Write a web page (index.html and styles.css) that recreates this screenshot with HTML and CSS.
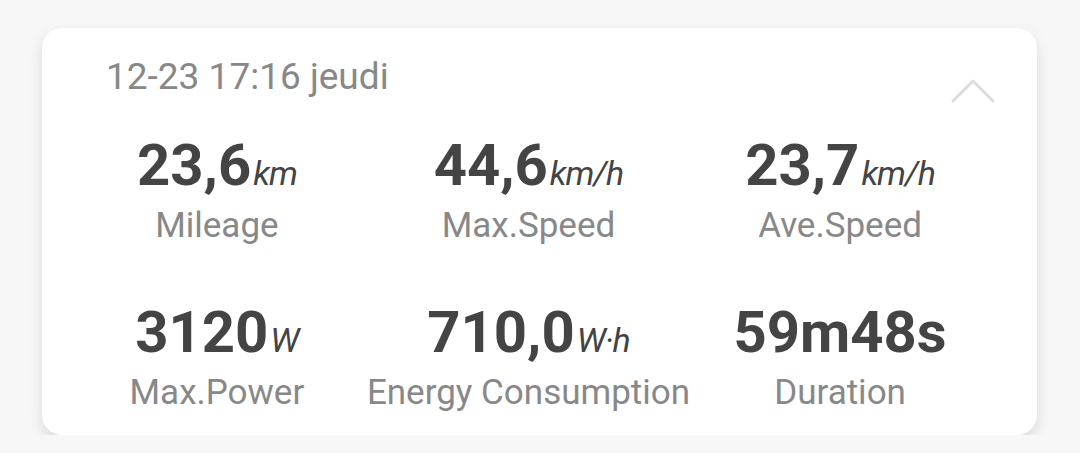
FILE: index.html
```html
<!DOCTYPE html>
<html lang="fr">
<head>
  <meta charset="UTF-8">
  <title>Trajet</title>
  <link rel="stylesheet" href="styles.css">
</head>
<body>
  <div class="card">
    <div class="date">12-23 17:16 jeudi</div>
    <svg class="toggle" width="44" height="26" viewBox="0 0 44 26">
      <polyline points="2,24 22,4 42,24" fill="none" stroke="#dcdcdc" stroke-width="3" stroke-linecap="round" stroke-linejoin="round"/>
    </svg>

    <div class="stats">
      <div class="stat">
        <div class="value">23,6<span class="unit">km</span></div>
        <div class="label">Mileage</div>
      </div>
      <div class="stat">
        <div class="value">44,6<span class="unit">km/h</span></div>
        <div class="label">Max.Speed</div>
      </div>
      <div class="stat">
        <div class="value">23,7<span class="unit">km/h</span></div>
        <div class="label">Ave.Speed</div>
      </div>
      <div class="stat">
        <div class="value">3120<span class="unit">W</span></div>
        <div class="label">Max.Power</div>
      </div>
      <div class="stat">
        <div class="value">710,0<span class="unit">W·h</span></div>
        <div class="label">Energy Consumption</div>
      </div>
      <div class="stat">
        <div class="value">59m48s</div>
        <div class="label">Duration</div>
      </div>
    </div>
  </div>
</body>
</html>
```

FILE: styles.css
```css
body {
  margin: 0;
  background-color: #f7f7f7;
  font-family: Roboto, "Liberation Sans", sans-serif;
}

.card {
  position: relative;
  box-sizing: border-box;
  width: 995px;
  margin: 28px 0 0 42px;
  padding: 27px 47px 22px 25px;
  background-color: white;
  border-radius: 20px;
  box-shadow: 0 6px 14px rgba(0, 0, 0, 0.12);
}

.date {
  margin-left: 39px;
  font-size: 37px;
  line-height: 44px;
  color: #888;
}

.toggle {
  position: absolute;
  top: 49px;
  right: 42px;
}

.stats {
  display: grid;
  grid-template-columns: repeat(3, 1fr);
  row-gap: 51px;
  margin-top: 31px;
}

.stat {
  text-align: center;
}

.value {
  font-size: 58px;
  line-height: 70px;
  font-weight: bold;
  color: #444;
  white-space: nowrap;
}

.unit {
  font-size: 34px;
  line-height: 1;
  font-weight: normal;
  font-style: italic;
  letter-spacing: -1px;
  margin-left: 2px;
}

.label {
  margin-top: 6px;
  font-size: 35px;
  line-height: 40px;
  color: #888;
  white-space: nowrap;
}
```
